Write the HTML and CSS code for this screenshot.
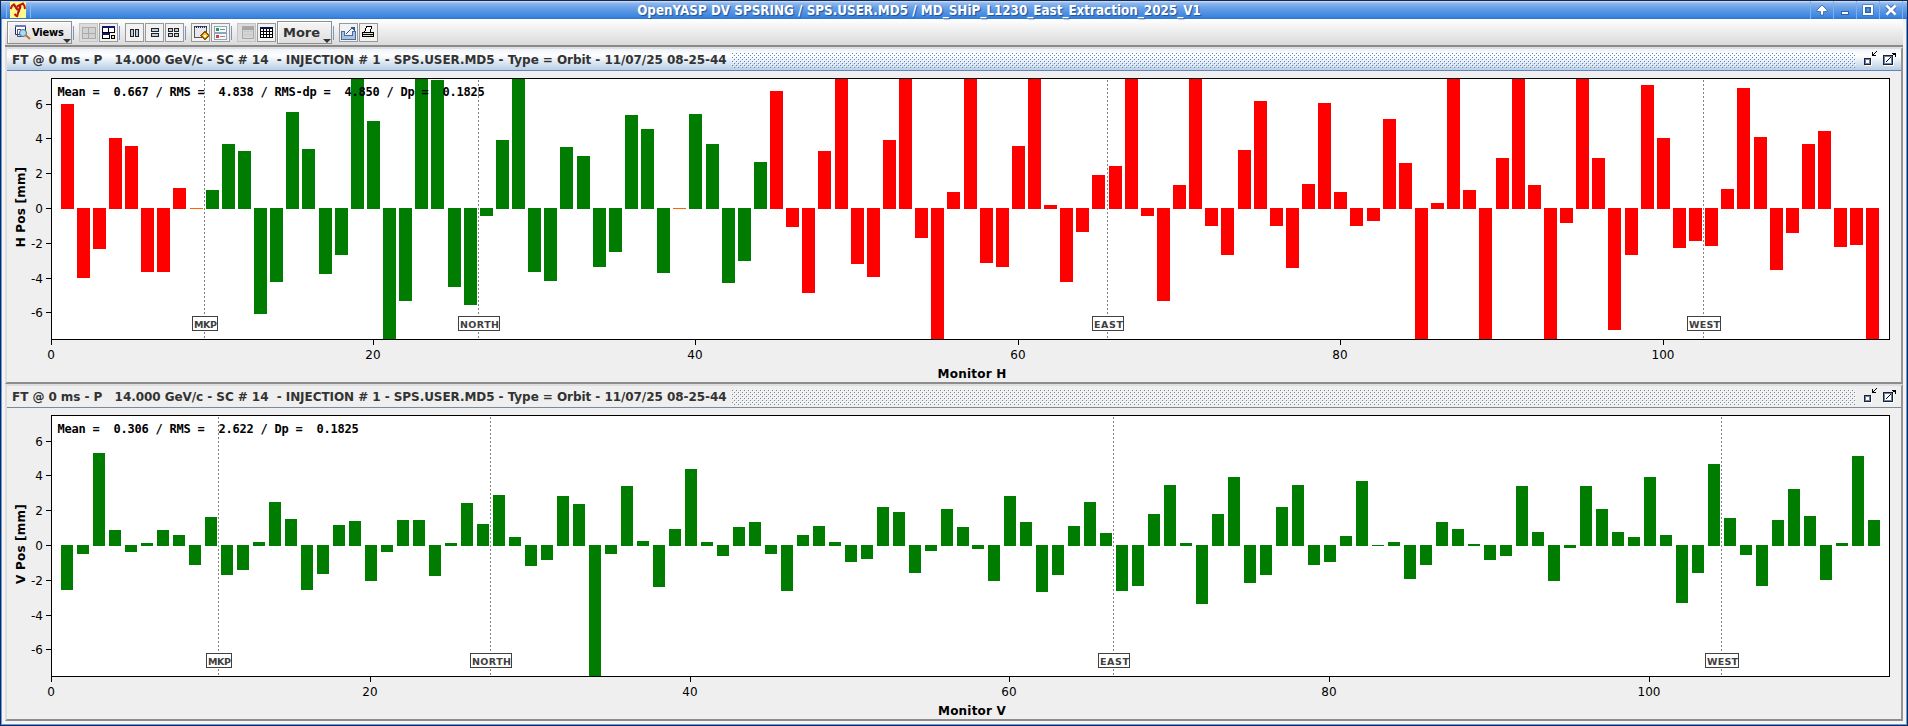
FILE: index.html
```html
<!DOCTYPE html>
<html lang="en">
<head>
    <meta charset="UTF-8">
    <title>OpenYASP DV SPSRING</title>
    <link rel="stylesheet" href="styles.css">
</head>
<body>
    <div class="window">
        <div class="titlebar">
            <div class="app-icon">
                <svg width="16" height="16" viewBox="0 0 16 16">
                    <rect width="16" height="16" fill="#fff98c"/>
                    <path d="M0.500 7 L2 4 L4 2.500 L6 5 L8 8 M7 4.500 L10 3 L13 1.500 L14.500 4 L15 7 M10.500 3.500 L9 8 L8 11 L7 15 M4.500 12 L7 14.500" fill="none" stroke="#c4160c" stroke-width="2"/>
                    <path d="M4 4 L7 8.500 M11 5 L8.500 11" stroke="#6c1208" stroke-width="0.800"/>
                </svg>
            </div>
            <div class="title">OpenYASP DV SPSRING / SPS.USER.MD5 / MD_SHiP_L1230_East_Extraction_2025_V1</div>
            <div class="win-buttons">
                <div class="win-btn"><svg width="12" height="12" viewBox="0 0 12 12"><path d="M6 1 L11 6 L11 7.500 L7.500 7.500 L7.500 11 L4.500 11 L4.500 7.500 L1 7.500 L1 6 Z" fill="#fff" stroke="#2f62a8" stroke-width="0.800"/></svg></div>
                <div class="win-btn"><svg width="12" height="12" viewBox="0 0 12 12"><rect x="2.500" y="7.500" width="7" height="3" fill="#fff" stroke="#2f62a8"/></svg></div>
                <div class="win-btn"><svg width="12" height="12" viewBox="0 0 12 12"><rect x="2.500" y="2.500" width="7" height="7" fill="none" stroke="#2f62a8" stroke-width="4"/><rect x="2" y="2" width="8" height="8" fill="none" stroke="#fff" stroke-width="2"/></svg></div>
                <div class="win-btn"><svg width="12" height="12" viewBox="0 0 12 12"><path d="M2 2 L10 10 M10 2 L2 10" stroke="#2f62a8" stroke-width="4.500"/><path d="M1.500 1.500 L10.500 10.500 M10.500 1.500 L1.500 10.500" stroke="#fff" stroke-width="2.800"/></svg></div>
            </div>
        </div>

        <div class="toolbar">
            <div class="menu-btn views">
                <svg width="18" height="17" viewBox="0 0 18 17">
                    <path d="M1.500 1.500 H11.500 V10.500 H1.500 Z" fill="#fff" stroke="#222a66"/>
                    <path d="M1 2 H12" stroke="#6f76bc" stroke-width="2"/>
                    <path d="M3.500 5.500 H7 M3.500 5.500 V12.500 H8" fill="none" stroke="#454a89"/>
                    <circle cx="9" cy="9" r="3.500" fill="#a9dcf4" stroke="#446b88"/>
                    <path d="M11.500 11 L16 15" stroke="#c8702c" stroke-width="2"/>
                </svg>
                <span>Views</span>
                <i class="arrow"></i>
            </div>
            <div class="sep"></div>
            <div class="group">
                <div class="tool off"><svg width="17" height="17" viewBox="0 0 17 17"><path d="M2.500 3.500 H15.500 V14.500 H2.500 Z M8.500 3.500 V14.500 M2.500 9.500 H15.500" fill="#d2d2d2" stroke="#aaa"/></svg></div>
                <div class="tool"><svg width="17" height="17" viewBox="0 0 17 17"><path d="M2.500 3.500 H8.500 V8.500 H2.500 Z M8.500 3.500 H14.500 V8.500 H8.500 Z M2.500 9.500 H9.500 V14.500 H2.500 Z" fill="#fff" stroke="#000"/><path d="M2 3 H15 M2 10 H10" stroke="#14186c" stroke-width="2"/><rect x="11.500" y="11.500" width="3" height="3" fill="#ffe680" stroke="#000"/></svg></div>
            </div>
            <div class="sep"></div>
            <div class="group">
                <div class="tool"><svg width="17" height="17" viewBox="0 0 17 17"><path d="M4.500 5.500 H7.500 V12.500 H4.500 Z M9.500 5.500 H12.500 V12.500 H9.500 Z" fill="#b8cfe5" stroke="#222"/></svg></div>
                <div class="tool"><svg width="17" height="17" viewBox="0 0 17 17"><path d="M5.500 4.500 H12.500 V7.500 H5.500 Z M5.500 9.500 H12.500 V12.500 H5.500 Z" fill="#b8cfe5" stroke="#222"/></svg></div>
                <div class="tool"><svg width="17" height="17" viewBox="0 0 17 17"><path d="M2.500 4.500 H6.500 V7.500 H2.500 Z M8.500 4.500 H12.500 V7.500 H8.500 Z M2.500 9.500 H6.500 V12.500 H2.500 Z M8.500 9.500 H12.500 V12.500 H8.500 Z" fill="#b8cfe5" stroke="#222"/></svg></div>
            </div>
            <div class="sep"></div>
            <div class="group">
                <div class="tool"><svg width="17" height="17" viewBox="0 0 17 17"><rect x="2.500" y="2.500" width="12" height="11" fill="#e6e8f0" stroke="#555"/><path d="M2 3 H15" stroke="#23285c" stroke-width="2" stroke-dasharray="1 1"/><path d="M13 7.500 L17 11.500 L13 15.500 L9 11.500 Z" fill="#ffc83c" stroke="#8a5a00"/><rect x="12" y="11" width="2" height="2" fill="#fff"/></svg></div>
                <div class="tool"><svg width="17" height="17" viewBox="0 0 17 17"><path d="M2.500 2.500 H14.500 V8.500 H2.500 Z M2.500 9.500 H14.500 V15.500 H2.500 Z" fill="#f6fbff" stroke="#8fa5b8"/><rect x="4" y="4" width="3" height="3" fill="#2c9a4c"/><rect x="4" y="11" width="3" height="3" fill="#e03a3a"/><path d="M8 5.500 H13" stroke="#5fa07c"/><path d="M8 12.500 H13" stroke="#c87878"/></svg></div>
            </div>
            <div class="sep"></div>
            <div class="group">
                <div class="tool off"><svg width="17" height="17" viewBox="0 0 17 17"><rect x="4.500" y="2.500" width="11" height="12" fill="#d4d4d4" stroke="#aaa"/><path d="M4 4 H16" stroke="#a6a6a6" stroke-width="3"/><path d="M6 7.500 H14 M6 10.500 H14" stroke="#c2c2c2" stroke-dasharray="2 1"/></svg></div>
                <div class="tool"><svg width="17" height="17" viewBox="0 0 17 17"><path d="M2.500 3.500 H14.500 V13.500 H2.500 Z M5.500 4 V14 M8.500 4 V14 M11.500 4 V14 M3 7.500 H14 M3 10.500 H14" fill="#fff" stroke="#000"/><path d="M2 4 H15" stroke="#0c1248" stroke-width="2"/></svg></div>
            </div>
            <div class="menu-btn more"><span>More</span><i class="arrow"></i></div>
            <div class="sep"></div>
            <div class="group">
                <div class="tool"><svg width="17" height="17" viewBox="0 0 17 17"><path d="M1.500 7.500 H4.500 V11.500 H12.500 V7.500 H15.500 V15.500 H1.500 Z" fill="#a9c3e4" stroke="#4b6c9c"/><path d="M6 10 L12 4" stroke="#2d5a94"/><path d="M10 2.500 H14.500 V7 Z" fill="#2d5a94"/></svg></div>
                <div class="tool"><svg width="17" height="17" viewBox="0 0 17 17"><path d="M6.500 2.500 H11.500 L10.500 8.500 H4.500 Z" fill="#fff" stroke="#000"/><path d="M2.500 8.500 H13.500 V12.500 H2.500 Z" fill="#e4e4e4" stroke="#000"/><path d="M3 10.500 H13" stroke="#000"/><path d="M10 11.500 H12" stroke="#c8c800"/></svg></div>
            </div>
        </div>

        <div class="frame active">
            <div class="frame-head">
                <span class="frame-title">FT @ 0 ms - P &nbsp; 14.000 GeV/c - SC # 14 &nbsp;- INJECTION # 1 - SPS.USER.MD5 - Type = Orbit - 11/07/25 08-25-44</span>
                <svg class="bumps" height="16"><defs><pattern id="bumpsA" width="4" height="4" patternUnits="userSpaceOnUse"><path d="M0 0 H1 V1 H0 Z M2 2 H3 V3 H2 Z" fill="#fff"/><path d="M1 1 H2 V2 H1 Z M3 3 H4 V4 H3 Z" fill="#6382bf"/></pattern></defs><rect width="100%" height="16" fill="url(#bumpsA)"/></svg>
                <svg class="frame-icons" width="34" height="17" viewBox="0 0 34 17"><use href="#frameIcons"/></svg>
            </div>
            <svg class="chart" id="chartH" width="1894" height="311"></svg>
        </div>

        <div class="frame">
            <div class="frame-head">
                <span class="frame-title">FT @ 0 ms - P &nbsp; 14.000 GeV/c - SC # 14 &nbsp;- INJECTION # 1 - SPS.USER.MD5 - Type = Orbit - 11/07/25 08-25-44</span>
                <svg class="bumps" height="16"><defs><pattern id="bumpsB" width="4" height="4" patternUnits="userSpaceOnUse"><path d="M0 0 H1 V1 H0 Z M2 2 H3 V3 H2 Z" fill="#fff"/><path d="M1 1 H2 V2 H1 Z M3 3 H4 V4 H3 Z" fill="#7a8a99"/></pattern></defs><rect width="100%" height="16" fill="url(#bumpsB)"/></svg>
                <svg class="frame-icons" width="34" height="17" viewBox="0 0 34 17">
                    <g id="frameIcons">
                        <rect x="2.500" y="8.500" width="6" height="6" fill="none" stroke="#fff"/>
                        <rect x="1.500" y="7.500" width="6" height="6" fill="#fff" stroke="#222"/>
                        <rect x="2.500" y="8.500" width="4" height="4" fill="none" stroke="#6382bf"/>
                        <path d="M13.500 0.500 L9.500 4.500 M9.500 1 V4.500 H13" fill="none" stroke="#000"/>
                        <rect x="21.500" y="5.500" width="9" height="9" fill="none" stroke="#fff"/>
                        <rect x="20.500" y="4.500" width="9" height="9" fill="#fff" stroke="#222"/>
                        <rect x="21.500" y="5.500" width="7" height="7" fill="none" stroke="#6382bf"/>
                        <path d="M22.500 11.500 L27.500 6.500 M29.500 4.500 L32.500 2.500 M29 2.500 H32.500 V6" fill="none" stroke="#000"/>
                    </g>
                </svg>
            </div>
            <svg class="chart" id="chartV" width="1894" height="311"></svg>
        </div>
    </div>
    <script src="script.js"></script>
</body>
</html>
```

FILE: styles.css
```css
body {
    margin: 0;
    background: #16294a;
    font-family: "DejaVu Sans", sans-serif;
    font-size: 12px;
}
.window {
    box-sizing: border-box;
    width: 1908px;
    height: 726px;
    border: 1px solid #16294a;
    background: #f4f4f4;
    box-shadow: inset 0 0 0 1px #5a9cf0;
    overflow: hidden;
}
.titlebar {
    display: flex;
    align-items: center;
    height: 18px;
    background: linear-gradient(#d4e4fa 0, #8fb8ee 2px, #6ea3e8 6px, #3a84e0 16px, #2f72cc 18px);
}
.app-icon {
    display: flex;
    width: 20px;
    margin-left: 5px;
    padding-left: 3px;
    border-left: 1px solid #8cb8f0;
    border-right: 1px solid #8cb8f0;
}
.title {
    flex: 1;
    margin-left: -3px;
    text-align: center;
    white-space: nowrap;
    color: #fff;
    font: bold 13.33px "DejaVu Sans Condensed", "DejaVu Sans", sans-serif;
    text-shadow: 1px 1px 1px #1f4f96;
}
.win-buttons {
    display: flex;
    margin-right: 4px;
    border-right: 1px solid #7fb0ee;
}
.win-btn {
    display: flex;
    box-sizing: border-box;
    width: 23px;
    height: 18px;
    padding: 3px 0 0 5px;
    border-left: 1px solid #7fb0ee;
}

.toolbar {
    display: flex;
    align-items: flex-start;
    height: 26px;
    margin: 0 4px;
    padding-left: 2px;
    border-bottom: 2px solid #8a8a8a;
    background: linear-gradient(#fff, #dadada);
}
.menu-btn {
    display: flex;
    align-items: center;
    box-sizing: border-box;
    height: 23px;
    margin-top: 2px;
    border: 1px solid #8f8f8f;
    box-shadow: inset 1px 1px 0 #fff;
    background: linear-gradient(#f6f6f6, #dedede);
    font-weight: bold;
    position: relative;
}
.views {
    width: 65px;
    padding-left: 6px;
    font-family: "DejaVu Sans Condensed", "DejaVu Sans", sans-serif;
    font-size: 11px;
    letter-spacing: -0.2px;
}
.more {
    width: 55px;
    margin-left: 1px;
    padding-left: 5px;
    color: #333;
    font-size: 13px;
}
.arrow {
    position: absolute;
    right: 0;
    bottom: 0;
    border: 4px solid transparent;
    border-top-color: #333;
    border-bottom: 0;
}
.sep {
    width: 1px;
    height: 14px;
    margin: 7px 5px 0 1px;
    background: #7a96c8;
}
.group {
    display: flex;
    gap: 1px;
    margin-top: 4px;
}
.tool {
    display: flex;
    box-sizing: border-box;
    width: 19px;
    height: 19px;
    border: 1px solid #999;
    background: #f2f2f2;
}
.tool.off {
    border-color: #c4c4c4;
    background: #dcdcdc;
}
.tool svg {
    shape-rendering: crispEdges;
}

.frame {
    box-sizing: border-box;
    width: 1898px;
    height: 337px;
    margin-left: 4px;
    border: 2px solid #dedede;
    border-right-color: #949494;
    border-bottom-color: #8c8c8c;
    background: #efefef;
}
.frame-head {
    display: flex;
    align-items: center;
    box-sizing: border-box;
    height: 22px;
    padding: 0 4px 0 5px;
    border-bottom: 1px solid #7a8a99;
}
.active .frame-head {
    background: linear-gradient(#eef3fa 0, #fff 30%, #b8cfe5);
    border-bottom-color: #6382bf;
}
.frame-title {
    width: 719px;
    white-space: nowrap;
    color: #333;
    font-weight: bold;
    letter-spacing: -0.06px;
}
.bumps {
    flex: 1;
    align-self: flex-start;
    margin-top: 3px;
}
.frame-icons {
    align-self: flex-start;
    margin: 2px 0 0 7px;
    shape-rendering: crispEdges;
}
.chart {
    display: block;
}
.chart text {
    white-space: pre;
}
.shape {
    shape-rendering: crispEdges;
}
.axis-label {
    font-weight: bold;
    letter-spacing: 0.2px;
}
.stats {
    font: bold 12px "DejaVu Sans Mono", monospace;
    letter-spacing: -0.224px;
}
.marker {
    fill: #404040;
    font-size: 9.5px;
    font-weight: bold;
}
```

FILE: script.js
```js
// bar lengths, counted in rows from the zero line; C is cut off by the plot edge
const C = 130;

const horizontal = [
    104, -69, -40, 70, 62, -63, -63, 20, 0, 18, 64, 57, -105, -73, 96, 59, -65, -46, C, 87,
    -C, -92, C, 128, -78, -96, -7, 68, C, -63, -72, 61, 52, -58, -43, 93, 79, -64, 0, 94,
    64, -74, -52, 46, 117, -18, -84, 57, C, -55, -68, 68, C, -29, -C, 16, C, -54, -58, 62,
    C, 3, -73, -23, 33, 42, C, -7, -92, 23, C, -17, -46, 58, 107, -17, -59, 24, 105, 16,
    -17, -12, 89, 45, -C, 5, C, 18, -C, 50, C, 23, -C, -14, C, 50, -121, -46, 123, 70,
    -39, -32, -37, 19, 120, 71, -61, -24, 64, 77, -38, -36, -C
];

const vertical = [
    -44, -8, 92, 15, -6, 2, 15, 10, -19, 28, -29, -24, 3, 43, 26, -44, -28, 20, 24, -35,
    -6, 25, 25, -30, 2, 42, 21, 50, 8, -20, -14, 49, 41, -C, -8, 59, 4, -41, 16, 76,
    3, -10, 18, 23, -8, -45, 10, 19, 3, -16, -13, 38, 33, -27, -5, 36, 18, -3, -35, 49,
    23, -46, -29, 19, 43, 12, -45, -40, 31, 60, 2, -58, 31, 68, -37, -29, 38, 60, -19, -16,
    9, 64, 0, 3, -33, -19, 23, 16, 1, -14, -10, 59, 13, -35, -2, 59, 36, 13, 8, 68,
    10, -57, -27, 81, 27, -9, -40, 25, 56, 29, -34, 2, 89, 25
];

const left = 44, top_ = 7, width = 1838, height = 261, zero = 137;

function rect(x, y, w, h, attrs) {
    return `<rect class="shape" x="${x}" y="${y}" width="${w}" height="${h}" ${attrs}/>`;
}

function drawChart(id, opts) {
    const px = v => Math.floor(left + v * width / opts.span + 0.0001);
    let out = rect(left + 0.5, top_ + 0.5, width, height, 'fill="#fff" stroke="#000"');

    opts.data.forEach((n, i) => {
        const x = Math.floor(left + (i + 1) * width / opts.span - opts.shift + 0.0001);
        const h = Math.min(Math.abs(n) + 1, n > 0 ? 130 : 131);
        const y = n > 0 ? zero - h + 1 : zero;
        out += rect(x, y, opts.barWidth, h, `fill="${opts.color(i + 1, n)}"`);
    });

    for (let v = -6; v <= 6; v += 2) {
        const y = Math.round(zero - v * 17.4);
        out += rect(left - 5, y, 5, 1, '');
        out += `<text x="${left - 8}" y="${y + 5}" text-anchor="end">${v}</text>`;
    }
    for (let v = 0; v <= 100; v += 20) {
        out += rect(px(v), top_ + height + 1, 1, 5, '');
        out += `<text x="${px(v)}" y="288" text-anchor="middle">${v}</text>`;
    }

    out += `<text class="stats" x="50.500" y="25">${opts.stats}</text>`;

    opts.markers.forEach(([name, v, w, off]) => {
        const x = px(v);
        out += `<path class="shape" d="M${x + 0.5} 9 V268" stroke="#808080" stroke-dasharray="2 2"/>`;
        out += rect(x - off + 0.5, 245.5, w - 1, 14, 'fill="#fff" stroke="#404040"');
        out += `<text class="marker" x="${x - off + 2}" y="257" textLength="${w - 3}">${name}</text>`;
    });

    out += `<text class="axis-label" x="965" y="307" text-anchor="middle">Monitor ${opts.plane}</text>`;
    out += `<text class="axis-label" transform="translate(18 136) rotate(-90)" text-anchor="middle">${opts.plane} Pos [mm]</text>`;
    document.getElementById(id).innerHTML = out;
}

drawChart('chartH', {
    plane: 'H',
    data: horizontal,
    span: 114,
    shift: 6,
    barWidth: 13,
    color: (i, n) => n === 0 ? '#ff6400' : (i >= 10 && i <= 44 ? '#007d00' : '#f00'),
    stats: 'Mean =  0.667 / RMS =  4.838 / RMS-dp =  4.850 / Dp =  0.1825',
    markers: [['MKP', 9.5, 26, 12], ['NORTH', 26.5, 42, 20], ['EAST', 65.5, 32, 15], ['WEST', 102.5, 34, 16]]
});

drawChart('chartV', {
    plane: 'V',
    data: vertical,
    span: 115,
    shift: 5,
    barWidth: 12,
    color: () => '#007d00',
    stats: 'Mean =  0.306 / RMS =  2.622 / Dp =  0.1825',
    markers: [['MKP', 10.5, 26, 12], ['NORTH', 27.5, 42, 20], ['EAST', 66.5, 32, 15], ['WEST', 104.5, 34, 16]]
});
```
